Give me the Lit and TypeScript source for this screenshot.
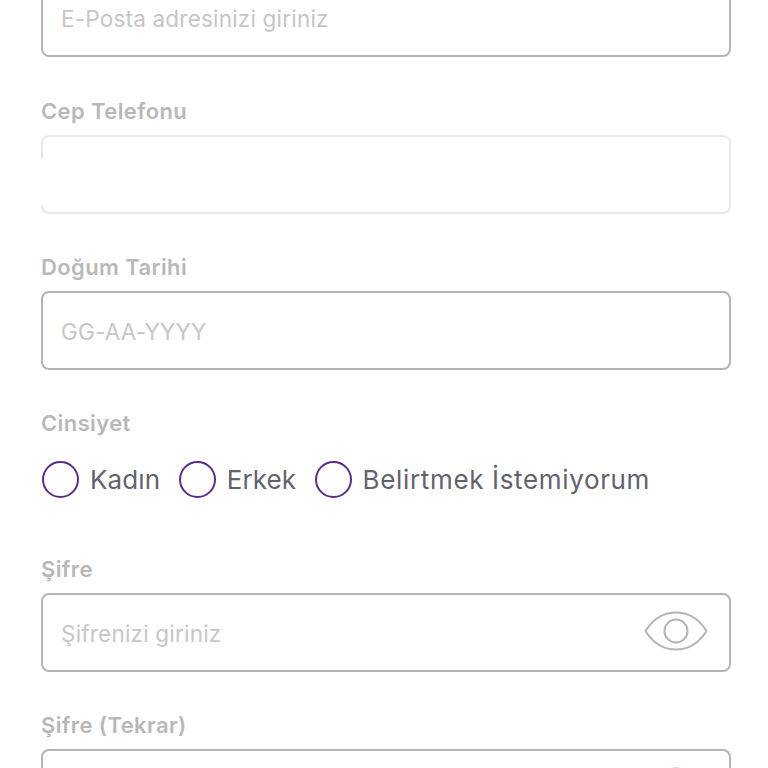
import { LitElement, html, css } from "lit";
import { customElement } from "lit/decorators.js";

const eye = html`<svg class="eye" viewBox="0 0 64 40" width="64" height="40" fill="none" stroke="#b4b4b4" stroke-width="2">
  <path d="M1.5 20 C9 8 20 1.500 32 1.500 S55 8 62.500 20 C55 32 44 38.500 32 38.500 S9 32 1.500 20 Z"/>
  <circle cx="32" cy="20" r="11.500"/>
</svg>`;

@customElement("app-root")
export class AppRoot extends LitElement {
  static styles = css`
    :host { display: block; width: 768px; height: 768px; overflow: hidden; background: #fff; font-family: Inter, "Noto Sans", sans-serif; }
    .form { display: flex; flex-direction: column; margin: -22px 37px 0 41px; }
    .field { display: flex; flex-direction: column; }
    .phone-field { margin-top: 1px; }
    .label { height: 24px; line-height: 24px; margin: 41px 0 12px; font-size: 22px; font-weight: 600; letter-spacing: 0.4px; color: #b8b8b8; }
    .input { position: relative; box-sizing: border-box; height: 79px; display: flex; align-items: center; justify-content: space-between; padding: 2px 21px 0 18px; border: 2px solid #b4b4b4; border-radius: 8px; background: #fff; font-size: 22.500px; letter-spacing: 0.2px; color: #c6c6c6; }
    .input.phone { border-color: #e9e9e9; }
    .mask { position: absolute; left: -2px; top: 22px; width: 20px; height: 46px; background: #fff; }
    .gender .label { margin-bottom: 25px; }
    .radios { display: flex; align-items: center; height: 38px; margin-bottom: 18px; margin-left: 1px; gap: 18.500px; }
    .radio { display: flex; align-items: center; gap: 11px; font-size: 26px; letter-spacing: 0.1px; color: #62626f; }
    .radio.long { letter-spacing: 0.65px; }
    .circle { box-sizing: border-box; width: 37px; height: 37px; border: 2px solid #5c2d86; border-radius: 50%; }
    .eye { display: block; margin-bottom: 6px; }
  `;
  field(label: string, placeholder: string, extra: unknown = "") {
    return html`<div class="field"><div class="label">${label}</div><div class="input"><span>${placeholder}</span>${extra}</div></div>`;
  }
  render() {
    return html`<div class="form">
      <div class="field"><div class="input"><span>E-Posta adresinizi giriniz</span></div></div>
      <div class="field phone-field"><div class="label">Cep Telefonu</div><div class="input phone"><div class="mask"></div></div></div>
      ${this.field("Doğum Tarihi", "GG-AA-YYYY")}
      <div class="field gender"><div class="label">Cinsiyet</div>
        <div class="radios">
          <div class="radio"><div class="circle"></div>Kadın</div>
          <div class="radio"><div class="circle"></div>Erkek</div>
          <div class="radio long"><div class="circle"></div>Belirtmek İstemiyorum</div>
        </div>
      </div>
      ${this.field("Şifre", "Şifrenizi giriniz", eye)}
      ${this.field("Şifre (Tekrar)", "", eye)}
    </div>`;
  }
}
